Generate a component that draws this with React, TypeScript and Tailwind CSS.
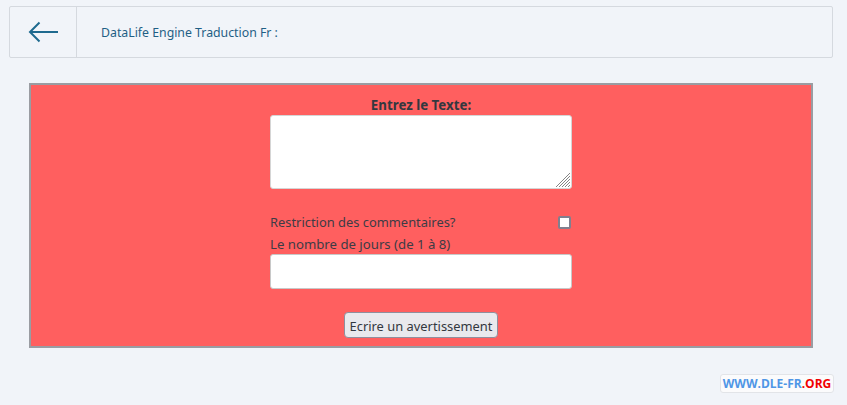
export default function App() {
  return (
    <div className="h-[405px] w-[847px] overflow-hidden bg-[#f1f4f9] px-[9px] pt-[6px] font-['Noto_Sans',sans-serif] text-[13px] text-[#3d3c45]">
      <div className="flex h-[52px] w-[824px] items-stretch rounded-[2px] border border-[#d5d9df]">
        <div className="flex w-[67px] items-center justify-center border-r border-[#d5d9df] pl-[2px]">
          <svg width="32" height="22" viewBox="0 0 32 22" fill="none" stroke="#1f6a8f" strokeWidth="2">
            <path d="M30 11H2" />
            <path d="M11.5 1.5L2 11l9.5 9.5" />
          </svg>
        </div>
        <div className="flex items-center pl-6 pt-[2px] text-[12.3px] text-[#1f5f85]">DataLife Engine Traduction Fr :</div>
      </div>

      <div className="ml-5 mt-[25px] flex h-[265px] w-[784px] flex-col items-center border-2 border-[#9a9ca2] bg-[#ff5f5f]">
        <div className="w-[302px]">
          <div className="pt-[11px] text-center text-[13.3px] font-bold leading-[19px] text-[#33383f]">Entrez le Texte:</div>
          <div className="relative h-[74px]">
            <textarea className="block h-[74px] w-[302px] resize-none rounded-[3px] border border-[#d5d5d5] bg-white" />
            <svg className="absolute bottom-[2px] right-[2px]" width="14" height="14" viewBox="0 0 14 14" stroke="#858585" strokeWidth="1">
              <path d="M0 14L14 0M3 14L14 3M6 14L14 6M9 14l5-5M12 14l2-2" />
            </svg>
          </div>
          <div className="mt-[22px] flex h-[22px] items-center justify-between">
            <span className="pt-[2px] text-[12.9px]">Restriction des commentaires?</span>
            <input type="checkbox" className="mr-[1px] h-[13px] w-[13px] appearance-none rounded-[2px] border-2 border-[#80808f] bg-white" />
          </div>
          <div className="h-[21px] pt-[1px] text-[13.2px] leading-[21px]">Le nombre de jours (de 1 à 8)</div>
          <input type="text" className="block h-[35px] w-[302px] rounded-[3px] border border-[#c8c8c8] bg-white" />
          <div className="mt-[23px] flex justify-center">
            <button className="h-[26px] w-[154px] whitespace-nowrap rounded-[4px] border border-[#8f8f9d] bg-[#e9e9ed] pt-[2px] text-[12.9px] leading-none text-[#33383f]">
              Ecrire un avertissement
            </button>
          </div>
        </div>
      </div>

      <div className="ml-[711px] mt-[26px] flex h-[19px] w-[114px] items-center justify-center rounded-[3px] border border-[#e2e4e8] bg-[#fbfbfc] font-['Open_Sans',sans-serif] text-[12px] font-bold text-[#4f96e6]">
        WWW.DLE-FR<span className="text-[#f00000]">.ORG</span>
      </div>
    </div>
  )
}
